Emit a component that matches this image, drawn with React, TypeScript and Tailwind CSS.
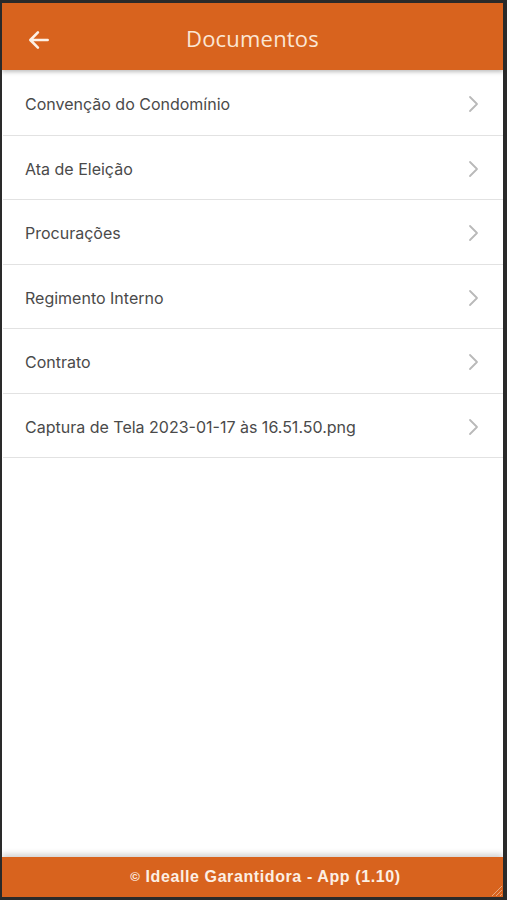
import React from 'react';

const docs = [
  'Convenção do Condomínio',
  'Ata de Eleição',
  'Procurações',
  'Regimento Interno',
  'Contrato',
  'Captura de Tela 2023-01-17 às 16.51.50.png',
];

const Chevron = () => (
  <svg width="12" height="18" viewBox="0 0 12 18" fill="none">
    <path d="M2 2l7 7-7 7" stroke="#b9b9b9" strokeWidth="1.8" strokeLinecap="round" strokeLinejoin="round" />
  </svg>
);

const App = () => {
  return (
    <div className="w-[507px] h-[900px] bg-[#2a2a2a] pt-[3px] pl-[2px] pr-[4px] pb-[3px] font-['Liberation_Sans',Arial,sans-serif]">
      <div className="relative flex flex-col h-full bg-white overflow-hidden">
        {/* header */}
        <header className="relative z-10 flex items-center h-[67px] pt-[4px] bg-[#d8631e] shadow-[0_2px_4px_rgba(0,0,0,0.25)]">
          <button className="absolute left-[24px] top-[24px] text-white">
            <svg width="26" height="26" viewBox="0 0 24 24" fill="none">
              <path d="M20 12H5M11 5l-7 7 7 7" stroke="#fdf1e6" strokeWidth="2.4" strokeLinecap="round" strokeLinejoin="round" />
            </svg>
          </button>
          <h1 className="w-full text-center text-[22px] text-[#fbe6d4] tracking-[0.2px] font-['Open_Sans',sans-serif] font-normal">
            Documentos
          </h1>
        </header>

        {/* list */}
        <ul className="flex-1 pl-[1px] pt-[1px]">
          {docs.map((d) => (
            <li
              key={d}
              className="flex items-center justify-between h-[64.5px] pl-[22px] pr-[23px] pt-[3px] border-b border-[#e2e2e2]"
            >
              <span className="text-[16px] text-[#4a4a4a] font-['Inter',sans-serif]">{d}</span>
              <Chevron />
            </li>
          ))}
        </ul>

        {/* footer */}
        <footer className="relative flex items-center justify-center h-[40px] pl-[26px] bg-[#d8631e] shadow-[0_-3px_6px_rgba(0,0,0,0.18)]">
          <span className="text-[16px] font-bold text-[#fcefe4] tracking-[0.6px] font-['Liberation_Sans',Arial,sans-serif]">
            <span className="text-[13px] align-[1px] mr-[5px]">©</span>
            Idealle Garantidora - App (1.10)
          </span>
          <svg className="absolute right-0 bottom-0" width="14" height="14" viewBox="0 0 14 14">
            <path d="M13 3L3 13M13 7L7 13M13 11L11 13" stroke="#e9a77c" strokeWidth="1" />
          </svg>
        </footer>
      </div>
    </div>
  );
};

export default App;
